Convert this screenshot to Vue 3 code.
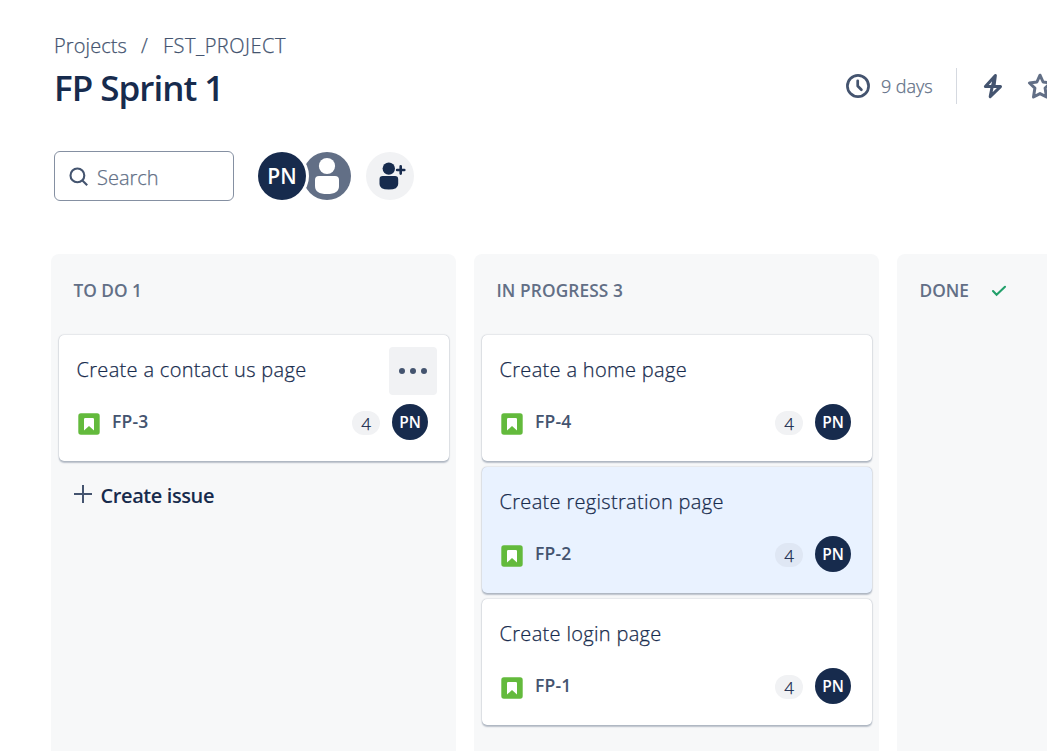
<script setup>
const columns = [
  {
    name: 'TO DO',
    count: 1,
    create: true,
    cards: [{ title: 'Create a contact us page', id: 'FP-3', points: 4, menu: true }],
  },
  {
    name: 'IN PROGRESS',
    count: 3,
    cards: [
      { title: 'Create a home page', id: 'FP-4', points: 4 },
      { title: 'Create registration page', id: 'FP-2', points: 4, selected: true },
      { title: 'Create login page', id: 'FP-1', points: 4 },
    ],
  },
  { name: 'DONE', done: true, cards: [] },
]
</script>

<template>
  <div class="page">
    <nav class="crumbs thin">
      <span class="crumb-a">Projects</span>
      <span class="slash">/</span>
      <span class="crumb-b">FST_PROJECT</span>
    </nav>

    <header class="head">
      <h1>FP Sprint 1</h1>
      <div class="actions">
        <svg class="clock" width="24" height="24" viewBox="0 0 24 24" fill="none" stroke="#44546f" stroke-width="2.7">
          <circle cx="12" cy="12" r="10.6" />
          <path d="M11.7 6.8V12l3.7 3.8" stroke-linecap="round" stroke-linejoin="round" />
        </svg>
        <span class="days thin">9 days</span>
        <span class="rule"></span>
        <svg class="bolt" width="20" height="26" viewBox="0 0 20 26" fill="none" stroke="#44546f" stroke-width="3" stroke-linejoin="round">
          <path d="M12.4 2.4 2.4 13.6H17.5L7.2 23.6 9.2 13.6ZM12.4 2.4 11 13" />
        </svg>
        <svg class="star" width="28" height="28" viewBox="0 0 28 28" fill="none" stroke="#626f86" stroke-width="3" stroke-linejoin="round">
          <path d="M14 3.2 17.1 10 24.5 11 19.1 16.1 20.5 25 14 21.6 7.5 25 8.9 16.1 3.5 11 10.9 10Z" />
        </svg>
      </div>
    </header>

    <div class="tools">
      <div class="search">
        <svg width="20" height="20" viewBox="0 0 20 20" fill="none" stroke="#44546f" stroke-width="2.1">
          <circle cx="8.4" cy="8.4" r="6.9" />
          <path d="M13.4 13.4 18.2 18.2" />
        </svg>
        <span class="thin">Search</span>
      </div>
      <div class="people">
        <div class="me">PN</div>
        <svg class="anon" width="48" height="48" viewBox="0 0 48 48">
          <circle cx="24" cy="24" r="24" fill="#626f86" />
          <circle cx="24" cy="14" r="8.1" fill="#fff" />
          <path d="M12 28Q12 24 16 24H32Q36 24 36 28V34Q36 42 24 42T12 34Z" fill="#fff" />
        </svg>
      </div>
      <div class="add">
        <svg width="28" height="30" viewBox="0 0 28 30" fill="#172b4d">
          <circle cx="10.8" cy="7.6" r="6.2" />
          <path d="M1.5 18.2Q1.5 15 4.7 15H17Q20.2 15 20.2 18.2V23Q20.2 28.6 10.8 28.6T1.5 23Z" />
          <path d="M22.7 5.4v7.2M19.1 9h7.2" stroke="#172b4d" stroke-width="2.6" stroke-linecap="round" />
        </svg>
      </div>
    </div>

    <main class="board">
      <section v-for="col in columns" :key="col.name" class="column">
        <h2 :class="{ wide: col.count === 3, last: col.done }">
          <span>{{ col.name }}{{ col.count ? ' ' + col.count : '' }}</span>
          <svg v-if="col.done" width="16" height="12" viewBox="0 0 16 12" fill="none" stroke="#22a06b" stroke-width="2.1">
            <path d="M2 6 5.6 9.8 14 1.8" stroke-linecap="round" />
          </svg>
        </h2>
        <div class="cards">
          <article v-for="card in col.cards" :key="card.id" class="card" :class="{ selected: card.selected }">
            <div class="top">
              <span class="title thin">{{ card.title }}</span>
              <div v-if="card.menu" class="menu"><i></i><i></i><i></i></div>
            </div>
            <div class="foot">
              <svg width="22" height="22" viewBox="0 0 22 22">
                <rect x="0.3" y="0.3" width="21.4" height="21.4" rx="2.6" fill="#63ba3c" />
                <path d="M7.2 5H14.8Q16 5 16 6.2V17.6L11 13 6 17.6V6.2Q6 5 7.2 5Z" fill="#fff" />
              </svg>
              <span class="id">{{ card.id }}</span>
              <span class="points thin">{{ card.points }}</span>
              <span class="owner">PN</span>
            </div>
          </article>
        </div>
        <div v-if="col.create" class="create">
          <svg width="18" height="18" viewBox="0 0 18 18" stroke="#44546f" stroke-width="2">
            <path d="M9 0V18M0 9H18" />
          </svg>
          <span>Create issue</span>
        </div>
      </section>
    </main>
  </div>
</template>

<style>
body {
  margin: 0;
  background: #fff;
  overflow: hidden;
}
</style>

<style scoped>
.page {
  width: 1047px;
  height: 751px;
  overflow: hidden;
  box-sizing: border-box;
  padding-top: 31px;
  font-family: 'Open Sans', 'Noto Sans', sans-serif;
  color: #172b4d;
  background: #fff;
}
.thin {
  font-weight: 300;
  -webkit-text-stroke: 0.25px currentColor;
}
.crumbs {
  display: flex;
  height: 30px;
  padding-left: 54px;
  align-items: center;
  font-size: 20px;
  line-height: 30px;
  color: #44546f;
  white-space: nowrap;
}
.crumb-a { width: 87px; letter-spacing: 0.1px; }
.slash { width: 22px; }
.crumb-b { letter-spacing: 0.5px; }
.head {
  display: flex;
  height: 54px;
  padding-left: 54px;
  align-items: center;
}
h1 {
  flex: none;
  width: 792px;
  margin: 0;
  font-size: 35px;
  line-height: 48px;
  font-weight: 600;
  letter-spacing: -1px;
}
.actions {
  display: flex;
  flex: none;
  align-items: center;
  height: 36px;
  margin-bottom: 4px;
}
.days {
  width: 75px;
  margin-left: 11px;
  box-sizing: border-box;
  font-size: 18px;
  letter-spacing: -0.05px;
  color: #626f86;
}
.rule { width: 1px; height: 36px; background: #d5d9e0; }
.bolt { margin-left: 26px; }
.star { margin-left: 23px; }
.tools {
  display: flex;
  align-items: center;
  height: 50px;
  margin-top: 36px;
  padding-left: 54px;
}
.search {
  display: flex;
  align-items: center;
  box-sizing: border-box;
  width: 180px;
  height: 50px;
  padding-left: 14px;
  border: 1px solid #8590a2;
  border-radius: 6px;
  font-size: 20px;
  color: #626f86;
}
.search svg { margin-top: 2px; }
.search span { margin-left: 8px; padding-top: 2px; }
.people { display: flex; margin-left: 24px; }
.me {
  z-index: 1;
  width: 48px;
  height: 48px;
  border-radius: 50%;
  background: #172b4d;
  box-shadow: 0 0 0 3px #fff;
  color: #fff;
  font-size: 21px;
  line-height: 48px;
  font-weight: 600;
  text-align: center;
}
.anon { margin-left: -3px; }
.add {
  display: flex;
  align-items: center;
  width: 48px;
  height: 48px;
  margin-left: 15px;
  border-radius: 50%;
  background: #f1f2f4;
}
.add svg { margin-left: 11.5px; }
.board {
  display: grid;
  grid-template-columns: repeat(3, 405px);
  gap: 18px;
  height: 497px;
  margin-top: 53px;
  padding-left: 51px;
}
.column {
  border-radius: 8px 8px 0 0;
  background: #f7f8f9;
}
h2 {
  display: flex;
  align-items: center;
  height: 24px;
  margin: 25px 0 32px 22.5px;
  font-size: 17.3px;
  line-height: 24px;
  font-weight: 600;
  letter-spacing: 0;
  color: #626f86;
}
h2.wide { letter-spacing: 0.1px; }
h2 svg { margin: 0 0 0 22px; }
.cards {
  display: flex;
  flex-direction: column;
  gap: 6px;
  padding: 0 7px 0 8px;
}
.card {
  box-sizing: border-box;
  height: 126px;
  padding: 12px 12px 0 17.5px;
  border-radius: 5px;
  background: #fff;
  box-shadow: 0 1.5px 1.5px rgba(9, 30, 66, 0.25), 0 0 1.5px rgba(9, 30, 66, 0.31);
}
.card.selected { background: #e9f2ff; }
.top {
  display: flex;
  justify-content: space-between;
  height: 48px;
}
.title {
  font-size: 20px;
  line-height: 46px;
  letter-spacing: 0.32px;
  white-space: nowrap;
}
.menu {
  display: flex;
  align-items: center;
  justify-content: center;
  gap: 4.5px;
  width: 48px;
  height: 48px;
  border-radius: 4px;
  background: #f1f2f4;
}
.menu i {
  width: 6.4px;
  height: 6.4px;
  border-radius: 50%;
  background: #44546f;
}
.foot {
  display: flex;
  align-items: center;
  height: 36px;
  margin-top: 9px;
  padding: 0 9px 0 1.5px;
}
.foot svg { margin-top: 4px; }
.id {
  margin: -2px 0 0 12px;
  font-size: 17.5px;
  font-weight: 600;
  letter-spacing: 0.2px;
  color: #44546f;
}
.points {
  width: 28px;
  height: 24px;
  margin: 1px 12px 0 auto;
  border-radius: 12px;
  background: #f1f2f4;
  font-size: 17px;
  line-height: 25px;
  text-align: center;
}
.selected .points { background: #dfe7f4; }
.owner {
  width: 36px;
  height: 36px;
  border-radius: 50%;
  background: #172b4d;
  color: #fff;
  font-size: 15.5px;
  line-height: 36px;
  font-weight: 600;
  text-align: center;
}
.create {
  display: flex;
  align-items: center;
  height: 30px;
  margin: 19px 0 0 23px;
  font-size: 20px;
  font-weight: 600;
}
.create svg { margin-top: -2px; }
.create span { margin-left: 8.5px; letter-spacing: -0.4px; }
</style>
